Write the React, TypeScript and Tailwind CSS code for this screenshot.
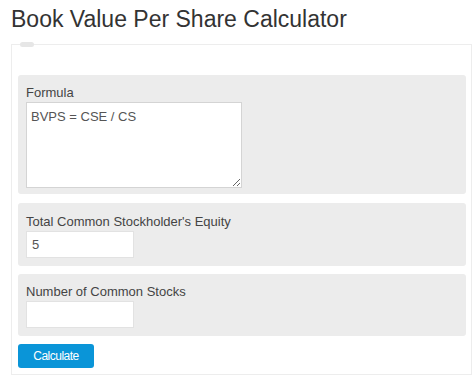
import React from 'react';

const font = { fontFamily: '"Liberation Sans", Arial, sans-serif' };

export default function App() {
  return (
    <div className="w-[474px] h-[378px] bg-white text-[#333] overflow-hidden" style={font}>
      <h1 className="pl-[11px] pt-[4px] h-[44px] text-[23px] leading-[30px] text-[#333]">
        Book Value Per Share Calculator
      </h1>

      <div className="relative ml-[11px] w-[461px] h-[331px] border border-[#ededed] pt-[30px] pl-[6px] pr-[5px]">
        <div className="absolute left-[8px] -top-[3px] w-[14px] h-[5px] rounded-full bg-[#e6e6e6]" />

        <div className="flex flex-col gap-[8px]">
          <div className="bg-[#ececec] rounded-[3px] px-[8px] pt-[8px] pb-[6px]">
            <label className="block text-[13px] leading-[19px] text-[#444]">Formula</label>
            <textarea
              defaultValue="BVPS = CSE / CS"
              className="block w-[216px] h-[86px] bg-white border border-[#d4d4d4] px-[4px] py-[5px] text-[13px] leading-[17px] text-[#555] outline-none"
              style={font}
            />
          </div>

          <div className="bg-[#ececec] rounded-[3px] px-[8px] pt-[9px] pb-[8px] mt-[1px]">
            <label className="block text-[13px] leading-[19px] text-[#444]">Total Common Stockholder's Equity</label>
            <input
              defaultValue="5"
              className="block w-[108px] h-[27px] bg-white border border-[#e2e2e2] px-[5px] text-[13px] text-[#555] outline-none"
              style={font}
            />
          </div>

          <div className="bg-[#ececec] rounded-[3px] px-[8px] pt-[8px] pb-[8px]">
            <label className="block text-[13px] leading-[19px] text-[#444]">Number of Common Stocks</label>
            <input
              className="block w-[108px] h-[27px] bg-white border border-[#e2e2e2] px-[5px] text-[13px] text-[#555] outline-none"
              style={font}
            />
          </div>

          <button
            className="w-[76px] h-[24px] rounded-[3px] bg-[#0a95d8] text-white text-[12px] tracking-[-0.5px] leading-[24px] text-center"
            style={font}
          >
            Calculate
          </button>
        </div>
      </div>
    </div>
  );
}
